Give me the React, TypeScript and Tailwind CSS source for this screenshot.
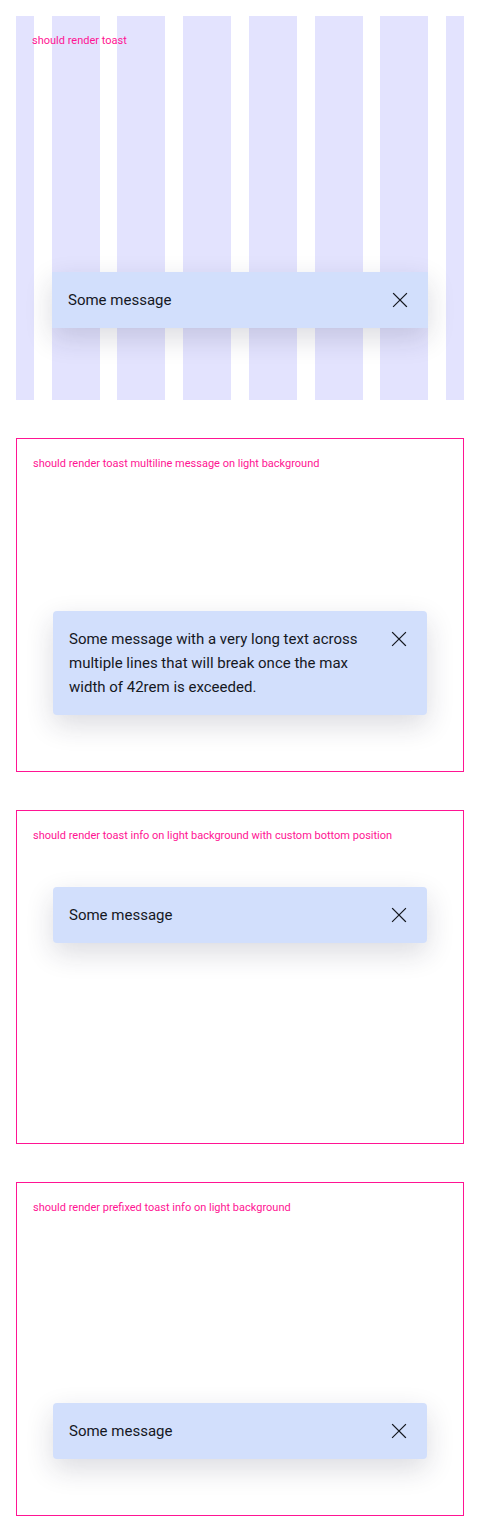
import React from "react";

const font = { fontFamily: "Roboto, 'Noto Sans', sans-serif" };

function CloseIcon() {
  return (
    <svg width="24" height="24" viewBox="0 0 24 24" fill="none" aria-hidden="true">
      <path d="M5.5 5.5 L18.5 18.5 M18.5 5.5 L5.5 18.5" stroke="#15181f" strokeWidth="1.15" strokeLinecap="square" />
    </svg>
  );
}

function Toast({ children, width, rounded = true }: { children: React.ReactNode; width: string; rounded?: boolean }) {
  return (
    <div
      className={`${width} self-center flex items-start gap-2 bg-[#d2dffc] p-4 shadow-[0_10px_28px_rgba(30,30,60,0.16)] ${rounded ? "rounded-[4px]" : ""}`}
    >
      <p className="flex-1 text-[15px] leading-6 text-[#15181f]">{children}</p>
      <button className="w-6 h-6 shrink-0 flex items-center justify-center">
        <CloseIcon />
      </button>
    </div>
  );
}

function Label({ children }: { children: React.ReactNode }) {
  return <div className="text-[11px] leading-4 text-[#ff1493] pt-px">{children}</div>;
}

export default function App() {
  return (
    <div className="w-[480px] bg-white pt-4 pb-[22px]" style={font}>
      {/* Section 1 with grid background */}
      <div className="relative mx-4 h-[384px] flex flex-col">
        <div className="absolute inset-0 flex justify-between">
          <div className="w-[18px] bg-[#e3e3fe]" />
          <div className="w-[48px] bg-[#e3e3fe]" />
          <div className="w-[48px] bg-[#e3e3fe]" />
          <div className="w-[48px] bg-[#e3e3fe]" />
          <div className="w-[48px] bg-[#e3e3fe]" />
          <div className="w-[48px] bg-[#e3e3fe]" />
          <div className="w-[48px] bg-[#e3e3fe]" />
          <div className="w-[18px] bg-[#e3e3fe]" />
        </div>
        <div className="relative flex flex-col flex-1 p-4">
          <Label>should render toast</Label>
          <div className="flex-1" />
          <div className="flex flex-col mb-[56px]">
            <Toast width="w-[376px]" rounded={false}>Some message</Toast>
          </div>
        </div>
      </div>

      {/* Section 2 */}
      <div className="mx-4 mt-[38px] h-[334px] border border-[#ff1493] flex flex-col p-4">
        <Label>should render toast multiline message on light background</Label>
        <div className="flex-1" />
        <div className="flex flex-col mb-[40px]">
          <Toast width="w-[374px]">
            Some message with a very long text across multiple lines that will break once the max width of 42rem is exceeded.
          </Toast>
        </div>
      </div>

      {/* Section 3 */}
      <div className="mx-4 mt-[38px] h-[334px] border border-[#ff1493] flex flex-col p-4">
        <Label>should render toast info on light background with custom bottom position</Label>
        <div className="flex flex-col mt-[43px]">
          <Toast width="w-[374px]">Some message</Toast>
        </div>
      </div>

      {/* Section 4 */}
      <div className="mx-4 mt-[38px] h-[334px] border border-[#ff1493] flex flex-col p-4">
        <Label>should render prefixed toast info on light background</Label>
        <div className="flex-1" />
        <div className="flex flex-col mb-[40px]">
          <Toast width="w-[374px]">Some message</Toast>
        </div>
      </div>
    </div>
  );
}
